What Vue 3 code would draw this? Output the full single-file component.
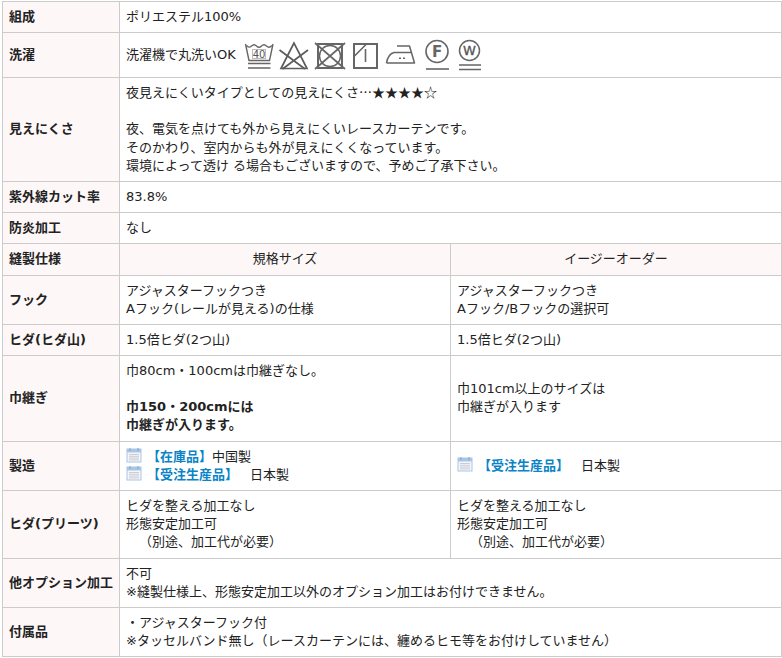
<script setup>
const calendarDots = []
for (let r = 0; r < 4; r++) {
  for (let c = 0; c < 5; c++) calendarDots.push({ x: 3.5 + c * 2, y: 6 + r * 1.8 })
}
</script>

<template>
  <table class="spec">
    <colgroup>
      <col class="c1" />
      <col class="c2" />
      <col class="c3" />
    </colgroup>
    <tbody>
      <tr>
        <th>組成</th>
        <td colspan="2">ポリエステル100%</td>
      </tr>
      <tr>
        <th>洗濯</th>
        <td colspan="2">
          <div class="wash">
            <span>洗濯機で丸洗いOK</span>
            <span class="icons">
              <svg width="34" height="32" viewBox="244 39 34 32">
                <g fill="none" stroke="#666" stroke-width="1.4">
                  <path d="M245.5 44 L249 60.5 H269.5 L273 44" />
                  <path d="M246.5 45.5 Q249 48.5 251.5 46 T256.5 46 T261.5 46 T266.5 46 T272 45.5" />
                  <rect x="252.5" y="49.5" width="13" height="9" stroke-width="1" stroke="#bbb" />
                </g>
                <text x="259" y="57.5" text-anchor="middle" class="t40">40</text>
                <path d="M248 63.5 H270.5 M248 68 H270.5" stroke="#666" stroke-width="1.6" />
              </svg>
              <svg width="35" height="32" viewBox="278 39 35 32">
                <g fill="none" stroke="#5c5c5c" stroke-width="1.7">
                  <path d="M294 43 L281 68.5 H307 Z" />
                  <path d="M279.5 50 L305 69 M308 50 L282.5 69" />
                </g>
              </svg>
              <svg width="38" height="32" viewBox="313 39 38 32">
                <g fill="none" stroke="#666" stroke-width="2">
                  <rect x="318" y="44" width="24" height="24" />
                  <circle cx="330" cy="56" r="10.5" stroke-width="1.5" />
                  <path d="M315 43 L345 69 M345 43 L315 69" stroke-width="1.7" />
                </g>
              </svg>
              <svg width="33" height="32" viewBox="351 39 33 32">
                <g fill="none" stroke="#666" stroke-width="2">
                  <rect x="354" y="44" width="23" height="24" />
                  <path d="M354 56.5 L366 44.5 M365.5 49 V62" stroke-width="1.6" />
                </g>
              </svg>
              <svg width="40" height="32" viewBox="384 39 40 32">
                <g fill="none" stroke="#666" stroke-width="1.5" stroke-linejoin="round">
                  <path d="M386.5 63 Q388 54 394 52.5 H411.5 M397 46 H409.5 L414.5 63 H386.5" />
                </g>
                <path d="M399 57.5 h2 v1.5 h-2 Z M403 57.5 h2 v1.5 h-2 Z" fill="#666" />
              </svg>
              <svg width="33" height="32" viewBox="424 39 33 32">
                <circle cx="437" cy="51.5" r="11" fill="none" stroke="#666" stroke-width="1.6" />
                <text x="437" y="57" text-anchor="middle" class="tf">F</text>
                <path d="M426 69 H449" stroke="#666" stroke-width="1.6" />
              </svg>
              <svg width="27" height="32" viewBox="457 39 27 32">
                <circle cx="469.5" cy="50.5" r="10" fill="none" stroke="#666" stroke-width="1.5" />
                <text x="469.5" y="55" text-anchor="middle" class="tw">W</text>
                <path d="M459 65 H481 M459 69.5 H481" stroke="#666" stroke-width="1.5" />
              </svg>
            </span>
          </div>
        </td>
      </tr>
      <tr>
        <th>見えにくさ</th>
        <td colspan="2">
          <div>夜見えにくいタイプとしての見えにくさ<span class="jp">…★★★★☆</span></div>
          <div class="para">
            夜、電気を点けても外から見えにくいレースカーテンです。<br />
            そのかわり、室内からも外が見えにくくなっています。<br />
            環境によって透け る場合もございますので、予めご了承下さい。
          </div>
        </td>
      </tr>
      <tr>
        <th>紫外線カット率</th>
        <td colspan="2">83.8%</td>
      </tr>
      <tr>
        <th>防炎加工</th>
        <td colspan="2">なし</td>
      </tr>
      <tr>
        <th>縫製仕様</th>
        <td class="head">規格サイズ</td>
        <td class="head">イージーオーダー</td>
      </tr>
      <tr>
        <th>フック</th>
        <td>アジャスターフックつき<br />Aフック(レールが見える)の仕様</td>
        <td>アジャスターフックつき<br />Aフック/Bフックの選択可</td>
      </tr>
      <tr>
        <th>ヒダ(ヒダ山)</th>
        <td>1.5倍ヒダ(2つ山)</td>
        <td>1.5倍ヒダ(2つ山)</td>
      </tr>
      <tr>
        <th>巾継ぎ</th>
        <td>
          <div>巾80cm・100cmは巾継ぎなし。</div>
          <div class="para"><b>巾150・200cmには<br />巾継ぎが入ります。</b></div>
        </td>
        <td>巾101cm以上のサイズは<br />巾継ぎが入ります</td>
      </tr>
      <tr>
        <th>製造</th>
        <td>
          <div class="made">
            <svg class="cal" width="16" height="15" viewBox="0 0 16 15">
              <rect x="0.5" y="0.5" width="15" height="14" fill="#a9c6e6" />
              <rect x="1.5" y="4.5" width="13" height="9" fill="#f4f6fa" />
              <rect v-for="(d, i) in calendarDots" :key="i" :x="d.x" :y="d.y" width="1" height="1" fill="#a3a3ad" />
              <path d="M4 0 V3 M12 0 V3" stroke="#7fa3cc" />
            </svg><b class="blue">【在庫品】</b>中国製
          </div>
          <div class="made">
            <svg class="cal" width="16" height="15" viewBox="0 0 16 15">
              <rect x="0.5" y="0.5" width="15" height="14" fill="#a9c6e6" />
              <rect x="1.5" y="4.5" width="13" height="9" fill="#f4f6fa" />
              <rect v-for="(d, i) in calendarDots" :key="i" :x="d.x" :y="d.y" width="1" height="1" fill="#a3a3ad" />
              <path d="M4 0 V3 M12 0 V3" stroke="#7fa3cc" />
            </svg><b class="blue">【受注生産品】</b><span class="origin">日本製</span>
          </div>
        </td>
        <td>
          <div class="made">
            <svg class="cal" width="16" height="15" viewBox="0 0 16 15">
              <rect x="0.5" y="0.5" width="15" height="14" fill="#a9c6e6" />
              <rect x="1.5" y="4.5" width="13" height="9" fill="#f4f6fa" />
              <rect v-for="(d, i) in calendarDots" :key="i" :x="d.x" :y="d.y" width="1" height="1" fill="#a3a3ad" />
              <path d="M4 0 V3 M12 0 V3" stroke="#7fa3cc" />
            </svg><b class="blue">【受注生産品】</b><span class="origin">日本製</span>
          </div>
        </td>
      </tr>
      <tr>
        <th>ヒダ(プリーツ)</th>
        <td>ヒダを整える加工なし<br />形態安定加工可<div class="indent">（別途、加工代が必要）</div></td>
        <td>ヒダを整える加工なし<br />形態安定加工可<div class="indent">（別途、加工代が必要）</div></td>
      </tr>
      <tr>
        <th>他オプション加工</th>
        <td colspan="2">不可<br />※縫製仕様上、形態安定加工以外のオプション加工はお付けできません。</td>
      </tr>
      <tr>
        <th>付属品</th>
        <td colspan="2">・アジャスターフック付<br />※タッセルバンド無し（レースカーテンには、纏めるヒモ等をお付けしていません）</td>
      </tr>
    </tbody>
  </table>
</template>

<style scoped>
.spec {
  border-collapse: collapse;
  table-layout: fixed;
  width: 779px;
  margin: 1px 0 0 2px;
  font-family: "DejaVu Sans", "Noto Sans CJK JP", sans-serif;
  font-size: 13px;
  line-height: 1.4;
  color: #222;
}
.c1 { width: 117px; }
.c2 { width: 331px; }
.c3 { width: 331px; }
th, td {
  border: 1px solid #ccc;
  padding: 6px;
  text-align: left;
  vertical-align: middle;
}
th {
  background: #fdf7f7;
  font-weight: 700;
}
td.head {
  background: #fdf7f7;
  text-align: center;
}
.jp { font-family: "Noto Sans CJK JP", sans-serif; line-height: 0; }
.para { margin-top: 18px; }
.wash {
  display: flex;
  align-items: center;
  gap: 8px;
}
.icons { display: flex; }
.icons svg { display: block; }
.t40 { font: 10px "DejaVu Sans", sans-serif; fill: #555; }
.tf { font: 700 15px "DejaVu Sans", sans-serif; fill: #666; }
.tw { font: 13px "DejaVu Sans", sans-serif; fill: #555; stroke: #555; stroke-width: 0.3; }
.made { white-space: nowrap; }
.cal { vertical-align: -2px; margin-right: 5px; }
.blue { color: #0a84c6; }
.origin { margin-left: 12px; }
.indent { padding-left: 13px; }
</style>
